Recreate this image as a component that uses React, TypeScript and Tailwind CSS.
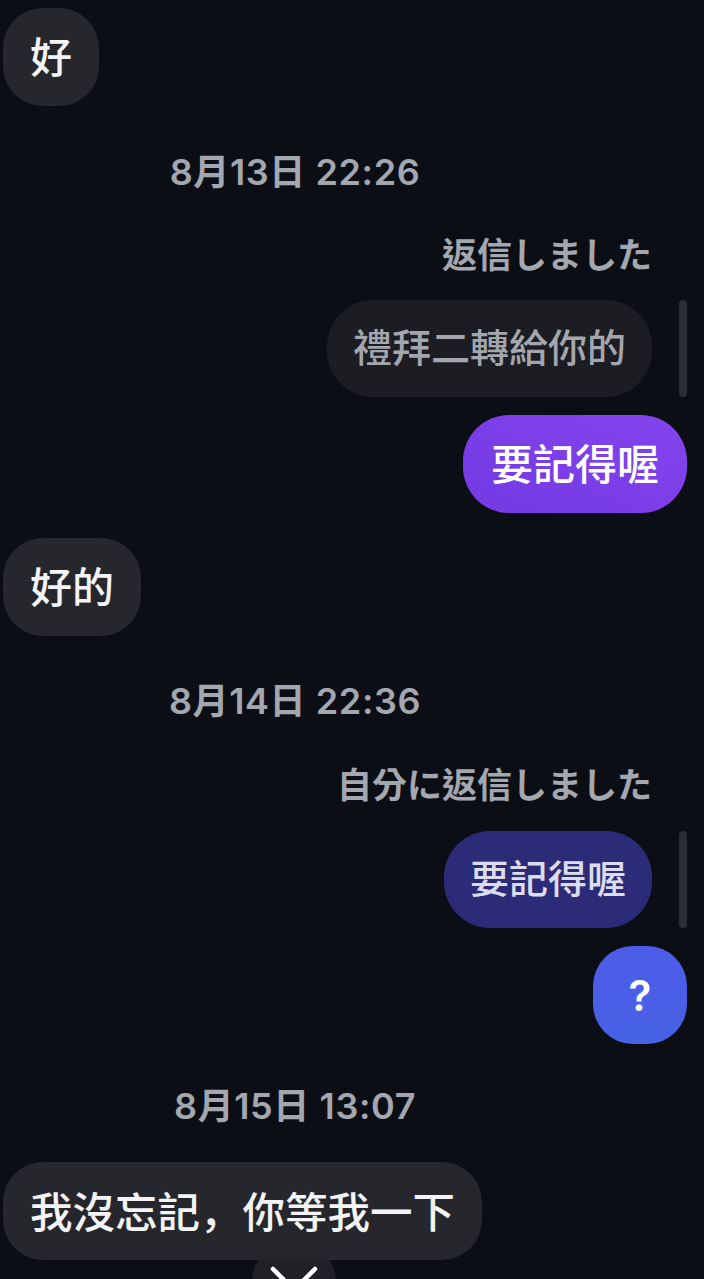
const FONT = "font-['Inter','Noto_Sans_CJK_TC',sans-serif]";

const Stamp = ({ text }: { text: string }) => (
  <div className="flex h-[44px] items-center justify-center pr-[114px] text-[36px] font-semibold tracking-[0.6px] text-[#a3a7b0]">
    {text}
  </div>
);

const Incoming = ({ children }: { children: React.ReactNode }) => (
  <div className="flex pl-[3px]">
    <div className="relative z-10 flex h-[98px] items-center rounded-[40px] bg-[#25272d] px-[27px] text-[42px] font-medium text-[#f4f4f6]">
      {children}
    </div>
  </div>
);

const Quoted = ({ text, tone }: { text: string; tone: "gray" | "indigo" }) => (
  <div className="flex items-stretch justify-end gap-[27px] pr-[17px]">
    <div
      className={
        tone === "gray"
          ? "flex h-[97px] items-center rounded-[46px] bg-[#1b1d23] px-[26px] text-[39px] font-medium text-[#a4a6ad]"
          : "flex h-[97px] items-center rounded-[46px] bg-[#2c2b78] px-[26px] text-[39px] font-medium text-[#dcdcec]"
      }
    >
      {text}
    </div>
    <div className="w-[8px] rounded-full bg-[#2b2e35]" />
  </div>
);

const ReplyLabel = ({ text }: { text: string }) => (
  <div className="flex h-[44px] items-center justify-end pr-[52px] text-[35px] font-semibold text-[#a3a7b0]">
    {text}
  </div>
);

export default function App() {
  return (
    <div className={`relative h-[1279px] w-[704px] overflow-hidden bg-[#0c0e15] ${FONT}`}>
      <div className="flex flex-col pt-[8px]">
        <Incoming>好</Incoming>
        <div className="h-[44px]" />
        <Stamp text="8月13日 22:26" />
        <div className="h-[39px]" />
        <ReplyLabel text="返信しました" />
        <div className="h-[23px]" />
        <Quoted text="禮拜二轉給你的" tone="gray" />
        <div className="h-[18px]" />
        <div className="flex justify-end pr-[17px]">
          <div className="flex h-[98px] items-center rounded-[46px] bg-gradient-to-tr from-[#7339e2] to-[#8444ee] px-[28px] text-[42px] font-medium text-white">
            要記得喔
          </div>
        </div>
        <div className="h-[25px]" />
        <Incoming>好的</Incoming>
        <div className="h-[43px]" />
        <Stamp text="8月14日 22:36" />
        <div className="h-[40px]" />
        <ReplyLabel text="自分に返信しました" />
        <div className="h-[24px]" />
        <Quoted text="要記得喔" tone="indigo" />
        <div className="h-[18px]" />
        <div className="flex justify-end pr-[17px]">
          <div className="flex h-[98px] w-[94px] items-center justify-center rounded-[40px] bg-gradient-to-b from-[#4d5ce8] to-[#4762e6] text-[42px] font-semibold text-white">
            ?
          </div>
        </div>
        <div className="h-[40px]" />
        <Stamp text="8月15日 13:07" />
        <div className="h-[34px]" />
        <Incoming>
          <span className="text-[42.5px]">
            我沒忘記<span className="font-['Noto_Sans_CJK_SC',sans-serif]">，</span>你等我一下
          </span>
        </Incoming>
      </div>
      <div className="absolute left-[252px] top-[1240px] h-[84px] w-[84px] rounded-full bg-[#1f2127]">
        <svg width="84" height="84" viewBox="0 0 84 84" fill="none">
          <polyline
            points="21,29 42,50 63,29"
            stroke="white"
            strokeWidth="4.5"
            strokeLinecap="round"
            strokeLinejoin="round"
          />
        </svg>
      </div>
    </div>
  );
}
